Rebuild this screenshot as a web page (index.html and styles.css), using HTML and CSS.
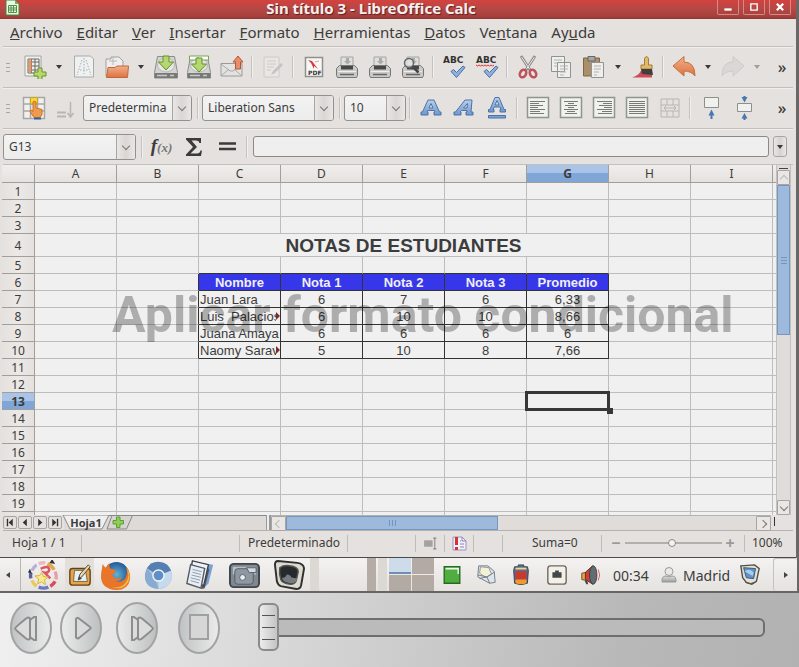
FILE: index.html
```html
<!DOCTYPE html>
<html lang="es">
<head>
<meta charset="utf-8">
<title>Sin título 3 - LibreOffice Calc</title>
<link rel="stylesheet" href="styles.css">
</head>
<body>
<svg class="defs" aria-hidden="true">
  <defs>
    <linearGradient id="gOrange" x2="0" y2="1"><stop stop-color="#f2b08d"/><stop offset="1" stop-color="#dd7340"/></linearGradient>
    <linearGradient id="gGrey" x2="0" y2="1"><stop stop-color="#e2e2e0"/><stop offset="1" stop-color="#9a9a98"/></linearGradient>
    <linearGradient id="gBlue" x2="0" y2="1"><stop stop-color="#b9cfea"/><stop offset="1" stop-color="#6f98cd"/></linearGradient>
    <linearGradient id="gPlay"><stop stop-color="#bfc2c3"/><stop offset="1" stop-color="#ececec"/></linearGradient>
    <linearGradient id="gPlayR"><stop stop-color="#ececec"/><stop offset="1" stop-color="#bcbfc0"/></linearGradient>
    <radialGradient id="gFox"><stop stop-color="#5fb4dc"/><stop offset="1" stop-color="#245893"/></radialGradient>
    <symbol id="printer" viewBox="0 0 24 24">
      <path d="M6 12V2h12v10z" fill="#dededc" stroke="#a5a5a3"/>
      <path d="M11 3h3v3h2l-3.500 3.500L9 6h2z" fill="#a9aaa7"/>
      <path d="M1.500 13.500l3-3h15l3 3v7l-1 2h-19l-1-2z" fill="#c9c9c6" stroke="#777"/>
      <path d="M6 11h12v3.500H6z" fill="#474747"/><path d="M5 19.500h14" stroke="#666" stroke-width="1.500"/><path d="M3 16.500h18" stroke="#eee"/>
    </symbol>
    <symbol id="disk" viewBox="0 0 24 24">
      <path d="M3.500 1.500h17l3 16v5.500h-23v-5.500z" fill="#d3d3d1" stroke="#8c8c8a"/>
      <path d="M.8 18h22.400v5H.8z" fill="#777977"/><path d="M3 20.500h10M16 20.500h4" stroke="#c8c8c6" stroke-width="1.500"/>
      <ellipse cx="12" cy="10" rx="8.500" ry="7" fill="#e6e6e4" stroke="#b7b7b5"/>
    </symbol>
    <symbol id="down" viewBox="0 0 24 24"><path d="M9 1h6v6h4.500L12 15 4.500 7H9z" fill="#b5d670" stroke="#5f9426"/></symbol>
    <symbol id="check" viewBox="0 0 24 24"><path d="M9 16.500l2.500-2 3 3 6.500-6.500 2 1.500-8.500 10z" fill="#8eb2e0" stroke="#4a6ea3"/></symbol>
    <symbol id="frame" viewBox="0 0 24 24"><path d="M1.500 1.500h21v20h-21z" fill="#f0f2ee" stroke="#91948f" stroke-width="1.500"/></symbol>
  </defs>
</svg>

<main class="window">
  <header class="titlebar">
    <svg class="app-icon" viewBox="0 0 16 16"><path d="M1 0h9l4 4v11H1z" fill="#f1f5ec" stroke="#3f8b35"/><path d="M10 0l4 4h-4z" fill="#70b25d"/><path d="M3.500 5.500h8v7h-8zM3.500 8h8M3.500 10h8M6 5.500v7M8.500 5.500v7" fill="none" stroke="#4a963f"/></svg>
    <h1>Sin título 3 - LibreOffice Calc</h1>
    <div class="win-buttons">
      <button aria-label="Minimizar"><svg viewBox="0 0 22 14"><path d="M7 8.500h8v2.500H7z" fill="#fff"/></svg></button>
      <button aria-label="Maximizar"><svg viewBox="0 0 22 14"><path d="M7.500 3.500h7v7h-7z" fill="none" stroke="#fff" stroke-width="1.500"/></svg></button>
      <button aria-label="Cerrar"><svg viewBox="0 0 22 14"><path d="M7.500 3.500l7 7m0-7l-7 7" stroke="#fff" stroke-width="2.500"/></svg></button>
    </div>
  </header>

  <nav class="menubar">
    <a href="#"><u>A</u>rchivo</a><a href="#"><u>E</u>ditar</a><a href="#"><u>V</u>er</a><a href="#"><u>I</u>nsertar</a><a href="#"><u>F</u>ormato</a><a href="#"><u>H</u>erramientas</a><a href="#"><u>D</u>atos</a><a href="#">Ve<u>n</u>tana</a><a href="#">Ay<u>u</u>da</a>
  </nav>

  <div class="toolbar standard">
    <span class="grip"></span>
    <button aria-label="Nuevo"><svg viewBox="0 0 24 24"><path d="M2 1h16v20H2z" fill="#f1f1ef" stroke="#a4a4a2"/><path d="M5 4h11v14H5zM5 7h11M5 11h11M5 15h11M8.500 4v14M12 4v14" fill="none" stroke="#666"/><path d="M5.500 4.500h3v13h-3z" fill="#e69a68"/><path d="M15 13h4v4h4v4h-4v4h-4v-4h-4v-4h4z" fill="#b8d86c" stroke="#64942c"/></svg></button>
    <button class="drop" aria-label="Más tipos"></button>
    <button aria-label="Plantilla"><svg viewBox="0 0 24 24"><path d="M2.500 1h16l3 3v18h-19z" fill="#eff0f0" stroke="#a9abab"/><path d="M10 5L5 20M14 5l5 15M12 3v16M8 15h8" stroke="#a7b0b5" fill="none" stroke-dasharray="1.500 1.500"/></svg></button>
    <button aria-label="Abrir"><svg viewBox="0 0 24 24"><path d="M1 21V4h5V2h8l4 4v15z" fill="#eee" stroke="#a0a09e"/><path d="M8 2v8M4 6h8" stroke="#b8b8b6"/><path d="M3 12.500h7l2-1.500h11.500l-1 11.500H1.500z" fill="url(#gOrange)" stroke="#c0683d"/></svg></button>
    <button class="drop" aria-label="Recientes"></button>
    <button aria-label="Guardar"><svg viewBox="0 0 24 24"><use href="#disk"/><use href="#down"/></svg></button>
    <button aria-label="Guardar como"><svg viewBox="0 0 24 24"><use href="#disk"/><path d="M2.500 1h19v4h-19z" fill="#fff" stroke="#76a552"/><path d="M11 2v2" stroke="#76a552"/><use href="#down" y="2"/></svg></button>
    <button aria-label="Correo"><svg viewBox="0 0 24 24"><path d="M1 8.500h21v12.500H1z" fill="#e2e2e0" stroke="#9b9b99"/><path d="M1 9l9 7 3 0 9-7M1 21l8-7M22 21l-8-7" fill="none" stroke="#aaa"/><path d="M15.500 14V7H13l5-6 5 6h-2.500v7z" fill="#e98d68" stroke="#b55634"/></svg></button>
    <i class="sep"></i>
    <button class="dim" aria-label="Editar"><svg viewBox="0 0 24 24"><path d="M3 2h15v20H3z" fill="#efefed" stroke="#aaa"/><path d="M6 6h9M6 9h9M6 12h7M6 15h4" stroke="#aaa"/><path d="M10 20l2-4 8-8 2 2-8 8z" fill="#999"/></svg></button>
    <i class="sep"></i>
    <button aria-label="Exportar PDF"><svg viewBox="0 0 24 24"><path d="M3.500 2.500h17v19h-17z" fill="#f7f7f5" stroke="#8f918d" stroke-width="1.500"/><path d="M6 5l4 1 6 8-4-3 0 3-3-6z" fill="#d43b43"/><path d="M13 7l4-1" stroke="#e8a0a0"/><text x="6" y="20" class="pdf">PDF</text></svg></button>
    <button aria-label="Imprimir directo"><svg viewBox="0 0 24 24"><use href="#printer"/></svg></button>
    <button aria-label="Imprimir"><svg viewBox="0 0 24 24"><use href="#printer"/></svg></button>
    <button aria-label="Vista previa"><svg viewBox="0 0 24 24"><use href="#printer"/><circle cx="8" cy="8" r="4.500" fill="#dfe3e5" fill-opacity=".8" stroke="#666" stroke-width="1.500"/><path d="M11.500 11.500l6 6" stroke="#444" stroke-width="2.500"/></svg></button>
    <i class="sep"></i>
    <button aria-label="Ortografía"><svg viewBox="0 0 24 24"><text x="1" y="8" class="abc">ABC</text><use href="#check"/></svg></button>
    <button aria-label="Revisión automática"><svg viewBox="0 0 24 24"><text x="1" y="8" class="abc">ABC</text><path d="M1 10l1.500 1L4 10l1.500 1L7 10l1.500 1 1.500-1 1.500 1 1.500-1 1.500 1 1.500-1 1.500 1 1.500-1" fill="none" stroke="#d33"/><use href="#check"/></svg></button>
    <i class="sep"></i>
    <button aria-label="Cortar"><svg viewBox="0 0 24 24"><path d="M5 1l9 14M19 1l-9 14" stroke="#8e908d" stroke-width="3"/><path d="M5.500 2l8 12M18.500 2l-8 12" stroke="#e6e6e4"/><ellipse cx="7" cy="18.500" rx="3" ry="4" transform="rotate(30 7 18.500)" fill="none" stroke="#bd525a" stroke-width="2.500"/><ellipse cx="17" cy="18.500" rx="3" ry="4" transform="rotate(-30 17 18.500)" fill="none" stroke="#bd525a" stroke-width="2.500"/></svg></button>
    <button aria-label="Copiar"><svg viewBox="0 0 24 24"><path d="M2.500 1.500h13v15h-13zM8.500 7.500h13v15h-13z" fill="#eff0ee" stroke="#91938f"/><path d="M5 5h8M5 8h3M5 11h3M11 11h8M11 14h8M11 17h6M11 20h4" stroke="#b0b2ae"/></svg></button>
    <button aria-label="Pegar"><svg viewBox="0 0 24 24"><path d="M1.500 3h16v18h-16z" fill="#a98f6a" stroke="#7d6747"/><path d="M6 1.500h7V6H6z" fill="#a7a9a5" stroke="#666"/><path d="M9.500 7.500h12v15h-12z" fill="#eff0ee" stroke="#91938f"/><path d="M12 11h7M12 14h7M12 17h5M12 20h3" stroke="#b0b2ae"/></svg></button>
    <button class="drop" aria-label="Pegado especial"></button>
    <button aria-label="Pincel de formato"><svg viewBox="0 0 24 24"><path d="M1 22.500q7-2 9-7l11 4v3z" fill="#cf4a55"/><path d="M13.500 10V3.500q2-4 4 0V10h3.500v4H10v-4z" fill="#e2b86a" stroke="#a57c36"/><path d="M10 14h11l1 6-11-1z" fill="#3f3f40"/></svg></button>
    <i class="sep"></i>
    <button aria-label="Deshacer"><svg viewBox="0 0 24 24"><path d="M1 11L12 1.500V7q11 0 11 14-4-5-11-5v5z" fill="url(#gOrange)" stroke="#c57138"/></svg></button>
    <button class="drop" aria-label="Lista deshacer"></button>
    <button class="dim" aria-label="Rehacer"><svg viewBox="0 0 24 24"><path d="M23 11L12 1.500V7Q1 7 1 21q4-5 11-5v5z" fill="#ccc" stroke="#aaa"/></svg></button>
    <button class="drop dim" aria-label="Lista rehacer"></button>
    <button class="more" aria-label="Más controles">»</button>
  </div>

  <div class="toolbar formatting">
    <span class="grip"></span>
    <button aria-label="Estilos"><svg viewBox="0 0 24 24"><path d="M1.500 1.500h21v21h-21zM1.500 8h21M1.500 15h21M8.500 1.500v21M15.500 1.500v21" fill="#f0f0ee" stroke="#a7a8a5" stroke-width="1.500"/><path d="M8.500 1.500h7V8h-7z" fill="#f2d43c" stroke="#c9a81f"/><path d="M11 6q1.500-1.500 3 0v6l6 1.500v5l-2 3h-6l-4-6 1-1.500 2 1.500z" fill="#ee9b4d" stroke="#c87325"/><path d="M12 21.500h7v2h-7z" fill="#3465a4"/></svg></button>
    <button class="dim" aria-label="Ordenar"><svg viewBox="0 0 24 24"><path d="M2 16.500h9M2 20.500h9" stroke="#777" stroke-width="2"/><path d="M15.500 6v14m-3-3l3 4 3-4" fill="none" stroke="#777" stroke-width="1.500"/></svg></button>
    <span class="combo style-box"><select aria-label="Estilo"><option>Predeterminado</option></select></span>
    <i class="sep"></i>
    <span class="combo font-box"><select aria-label="Nombre de la fuente"><option>Liberation Sans</option></select></span>
    <i class="sep"></i>
    <span class="combo size-box"><select aria-label="Tamaño"><option>10</option></select></span>
    <i class="sep"></i>
    <button aria-label="Negrita"><svg viewBox="0 0 24 24"><path fill-rule="evenodd" d="M9 4h6l5.500 12H22v3h-7v-3h1l-.5-1.500h-7L8 16h1v3H2v-3h1.500zM12 7.500L10 12h4z" fill="url(#gBlue)" stroke="#4b73aa"/></svg></button>
    <button aria-label="Cursiva"><svg viewBox="0 0 24 24"><path fill-rule="evenodd" d="M13 4h7l-1 12h2v3h-7v-3h1v-1.500H9.500L8 16h1v3H2v-3h1.500zM15.500 7.500L11.500 12h3.500z" fill="url(#gBlue)" stroke="#4b73aa"/></svg></button>
    <button aria-label="Subrayado"><svg viewBox="0 0 24 24"><path fill-rule="evenodd" d="M10 1.500h4l5 12h1.500v2.500H15v-2.500h1l-1-2.500H9l-1 2.500h1V16H3.500v-2.500H5zM12 4.500L10 9h4z" fill="url(#gBlue)" stroke="#4b73aa"/><path d="M3.500 19.500h17v2.500h-17z" fill="#7ba1d2" stroke="#4b73aa"/></svg></button>
    <i class="sep"></i>
    <button aria-label="Izquierda"><svg viewBox="0 0 24 24"><use href="#frame"/><path d="M4 5.500h15M4 7.500h9M4 9.500h13M4 11.500h8M4 13.500h15M4 15.500h10M4 17.500h14" stroke="#777a75"/></svg></button>
    <button aria-label="Centro"><svg viewBox="0 0 24 24"><use href="#frame"/><path d="M5 5.500h14M9 7.500h6M6 9.500h12M9 11.500h6M5 13.500h14M8 15.500h8M6 17.500h12" stroke="#777a75"/></svg></button>
    <button aria-label="Derecha"><svg viewBox="0 0 24 24"><use href="#frame"/><path d="M5 5.500h15M11 7.500h9M7 9.500h13M12 11.500h8M5 13.500h15M10 15.500h10M6 17.500h14" stroke="#777a75"/></svg></button>
    <button aria-label="Justificado"><svg viewBox="0 0 24 24"><use href="#frame"/><path d="M4 5.500h16M4 7.500h16M4 9.500h16M4 11.500h16M4 13.500h16M4 15.500h16M4 17.500h16" stroke="#777a75"/></svg></button>
    <button class="dim" aria-label="Combinar celdas"><svg viewBox="0 0 24 24"><path d="M3 3h18v18H3zM3 9h18M3 15h18M9 3v6M15 3v6M9 15v6M15 15v6M6 12h12M8 10l-2 2 2 2M16 10l2 2-2 2" fill="none" stroke="#777"/></svg></button>
    <i class="sep"></i>
    <button aria-label="Alinear abajo"><svg viewBox="0 0 24 24"><path d="M5.500 1.500h14v10h-14z" fill="#f0f0ee" stroke="#8c8f8a"/><path d="M12.500 23v-6" stroke="#4b76b0" stroke-width="2"/><path d="M9.500 19.500l3-6 3 6z" fill="#4b76b0"/></svg></button>
    <button aria-label="Centrar vertical"><svg viewBox="0 0 24 24"><path d="M5.500 7.500h14v8h-14z" fill="#f0f0ee" stroke="#8c8f8a"/><path d="M9.500 1h6l-3 5.500zM9.500 22.500l3-5.500 3 5.500zM11.500 0h2v3h-2zM11.500 21h2v3h-2z" fill="#4b76b0"/></svg></button>
    <button class="more" aria-label="Más controles">»</button>
  </div>

  <div class="toolbar formula">
    <span class="combo name-box"><select aria-label="Cuadro de nombre"><option>G13</option></select></span>
    <i class="sep"></i>
    <button class="fx" aria-label="Asistente de funciones"><b>f</b><em>(x)</em></button>
    <button aria-label="Suma"><svg viewBox="0 0 24 24"><path d="M4 3h15v5h-1.500q-.5-2.500-3-2.500H9.500L15 12l-6.500 6.500H15q3 0 3.500-3H20L19 21H4v-1.500l7-7.500-7-7.500z" fill="#3b3b3b"/></svg></button>
    <button aria-label="Función"><svg viewBox="0 0 24 24"><path d="M4 8.500h17M4 14h17" stroke="#3b3b3b" stroke-width="2.500"/></svg></button>
    <i class="sep"></i>
    <input class="formula-input" type="text" aria-label="Línea de entrada">
    <button class="expand" aria-label="Expandir barra"></button>
  </div>

  <div class="workspace">
    <div class="sheet-pane">
      <table class="sheet">
        <colgroup><col class="c-head"><col span="10" class="c-cell"></colgroup>
        <thead><tr><th></th><th>A</th><th>B</th><th>C</th><th>D</th><th>E</th><th>F</th><th class="current">G</th><th>H</th><th>I</th><th></th></tr></thead>
        <tbody>
          <tr><th>1</th><td></td><td></td><td></td><td></td><td></td><td></td><td></td><td></td><td></td><td></td></tr>
          <tr><th>2</th><td></td><td></td><td></td><td></td><td></td><td></td><td></td><td></td><td></td><td></td></tr>
          <tr><th>3</th><td></td><td></td><td></td><td></td><td></td><td></td><td></td><td></td><td></td><td></td></tr>
          <tr class="tall"><th>4</th><td></td><td></td><td colspan="5" class="heading">NOTAS DE ESTUDIANTES</td><td></td><td></td><td></td></tr>
          <tr class="above"><th>5</th><td></td><td></td><td></td><td></td><td></td><td></td><td></td><td></td><td></td><td></td></tr>
          <tr class="data names"><th>6</th><td></td><td></td><td>Nombre</td><td>Nota 1</td><td>Nota 2</td><td>Nota 3</td><td>Promedio</td><td></td><td></td><td></td></tr>
          <tr class="data"><th>7</th><td></td><td></td><td>Juan Lara</td><td>6</td><td>7</td><td>6</td><td>6,33</td><td></td><td></td><td></td></tr>
          <tr class="data"><th>8</th><td></td><td></td><td class="cut">Luis&nbsp; Palacios</td><td>6</td><td>10</td><td>10</td><td>8,66</td><td></td><td></td><td></td></tr>
          <tr class="data"><th>9</th><td></td><td></td><td>Juana Amaya</td><td>6</td><td>6</td><td>6</td><td>6</td><td></td><td></td><td></td></tr>
          <tr class="data"><th>10</th><td></td><td></td><td class="cut">Naomy Sarav</td><td>5</td><td>10</td><td>8</td><td>7,66</td><td></td><td></td><td></td></tr>
          <tr><th>11</th><td></td><td></td><td></td><td></td><td></td><td></td><td></td><td></td><td></td><td></td></tr>
          <tr><th>12</th><td></td><td></td><td></td><td></td><td></td><td></td><td></td><td></td><td></td><td></td></tr>
          <tr><th class="current">13</th><td></td><td></td><td></td><td></td><td></td><td></td><td class="selected"><span class="cursor"></span></td><td></td><td></td><td></td></tr>
          <tr><th>14</th><td></td><td></td><td></td><td></td><td></td><td></td><td></td><td></td><td></td><td></td></tr>
          <tr><th>15</th><td></td><td></td><td></td><td></td><td></td><td></td><td></td><td></td><td></td><td></td></tr>
          <tr><th>16</th><td></td><td></td><td></td><td></td><td></td><td></td><td></td><td></td><td></td><td></td></tr>
          <tr><th>17</th><td></td><td></td><td></td><td></td><td></td><td></td><td></td><td></td><td></td><td></td></tr>
          <tr><th>18</th><td></td><td></td><td></td><td></td><td></td><td></td><td></td><td></td><td></td><td></td></tr>
          <tr><th>19</th><td></td><td></td><td></td><td></td><td></td><td></td><td></td><td></td><td></td><td></td></tr>
          <tr class="partial"><th></th><td></td><td></td><td></td><td></td><td></td><td></td><td></td><td></td><td></td><td></td></tr>
        </tbody>
      </table>
      <p class="caption">Aplicar formato condicional</p>
    </div>
    <div class="vscroll">
      <i class="split"></i>
      <button class="sb up" aria-label="Subir"></button>
      <i class="thumb"></i>
      <i class="space"></i>
      <button class="sb down" aria-label="Bajar"></button>
    </div>
  </div>

  <div class="tabs">
    <div class="tab-nav">
      <button aria-label="Primera hoja"><svg viewBox="0 0 12 12"><path d="M2.500 2h1.500v8H2.500zM9 2v8L4.500 6z"/></svg></button>
      <button aria-label="Hoja anterior"><svg viewBox="0 0 12 12"><path d="M8 2v8L3.500 6z"/></svg></button>
      <button aria-label="Hoja siguiente"><svg viewBox="0 0 12 12"><path d="M4 2v8l4.500-4z"/></svg></button>
      <button aria-label="Última hoja"><svg viewBox="0 0 12 12"><path d="M3 2v8l4.500-4zM8 2h1.500v8H8z"/></svg></button>
    </div>
    <div class="tab-strip">
      <button class="tab"><svg class="tab-shape" viewBox="0 0 48 15" preserveAspectRatio="none"><path d="M1 0l7 14h32l7-14z" fill="#efefef" stroke="#888"/></svg><span>Hoja1</span></button>
      <button class="add" aria-label="Añadir hoja"><svg viewBox="0 0 28 15"><path d="M6 .5h20.500l-6 13.500H1z" fill="#d8d4d1" stroke="#888"/><path d="M10.500 2h3.500v3.500h3.500V9H14v3.500h-3.500V9H7V5.500h3.500z" fill="#8fcf55" stroke="#5d9e35"/></svg></button>
    </div>
    <i class="tab-split"></i>
    <div class="hscroll">
      <button class="sb left" aria-label="Izquierda"></button>
      <i class="thumb"></i>
      <i class="space"></i>
      <button class="sb right" aria-label="Derecha"></button>
    </div>
    <i class="split-v"></i>
  </div>

  <footer class="status">
    <span class="s-sheet">Hoja 1 / 1</span>
    <span class="s-blank"></span>
    <span class="s-style">Predeterminado</span>
    <span class="s-mid"></span>
    <span class="s-icon"><svg viewBox="0 0 14 12"><path d="M1 3h8v6H1z" fill="#a5a19e"/><path d="M9.500 1h3m-1.500 0v10m-1.500 0h3" stroke="#888" fill="none"/></svg></span>
    <span class="s-icon"><svg viewBox="0 0 15 15"><path d="M1 1h9l4 4v9H1z" fill="#f2f0f6" stroke="#9a94c4"/><path d="M10 1v4h4M8 5h1M8 8h4M8 11h4" fill="none" stroke="#8a84b8"/><path d="M3 1h3v8H3zM3 11h3v3H3z" fill="#d3323b"/></svg></span>
    <span class="s-gap"></span>
    <span class="s-sum">Suma=0</span>
    <span class="s-zoom"><b>−</b><input type="range" min="0" max="100" value="49" aria-label="Zoom"><b>+</b></span>
    <span class="s-pct">100%</span>
  </footer>
</main>

<section class="taskbar">
  <button class="edge" aria-label="Ocultar panel"><svg viewBox="0 0 8 8"><path d="M6 1v6L2 4z" fill="#444"/></svg></button>
  <button class="app w44" aria-label="Menú"><svg viewBox="0 0 32 32"><g fill="none" stroke-width="3.500"><path d="M4 11a13 13 0 0 1 5-6" stroke="#b9b0d8"/><path d="M11 4a13 13 0 0 1 7-1" stroke="#e9b9bf"/><path d="M20 4a13 13 0 0 1 7 6" stroke="#dda94c"/><path d="M28 12a13 13 0 0 1 1 8" stroke="#e3a0a8"/><path d="M28 22a13 13 0 0 1-5 5" stroke="#d54d58"/><path d="M21 28a13 13 0 0 1-10 0" stroke="#6d78c4"/><path d="M9 27a13 13 0 0 1-5-6" stroke="#e8c95a"/><path d="M3 19a13 13 0 0 1 0-6" stroke="#5a5f9e"/><path d="M13 9q8-4 9 1-1 4-5 3l6 6" stroke="#dc5560" stroke-width="2.500"/></g><path d="M14 13l2 4 5 .5-4 3 1 5-4-3-4 2 1-5-4-3 5-.5z" fill="#f7ea8c" stroke="#d8b23c"/><path d="M22 3l3-4 3 5zM0 13l2-4 2 5z" fill="#333"/></svg></button>
  <button class="app w29 lit" aria-label="Editor gráfico"><svg viewBox="0 0 26 26"><rect x="2" y="6" width="22" height="18" rx="3" fill="#e9a544" stroke="#5d4420" stroke-width="1.500"/><path d="M7 8h12l2 12H6z" fill="#e9eef0" stroke="#6d6350"/><path d="M11 18l2-6 9-10 2 2-9 11z" fill="#e6d4a8" stroke="#4f4433"/><path d="M12 14l3 3-4 2z" fill="#444"/></svg></button>
  <button class="app w43" aria-label="Firefox"><svg viewBox="0 0 32 32"><circle cx="17" cy="15" r="13" fill="url(#gFox)"/><path d="M2 9q0-3 1-5 1 3 3 4 2-4 4-5-1 4 1 6 4 0 6 3-3 1-4 3 0 4 5 4 3 0 5-2-2 5-7 5 6 2 10-3 3-5 1-12 5 6 4 13-2 11-14 11Q2 30 1 18q0-6 1-9z" fill="#e8752a"/><path d="M27 8q5 9-1 16-6 6-14 4 12 4 17-5 4-8-2-15z" fill="#f4b63f"/></svg></button>
  <button class="app w43" aria-label="Chromium"><svg viewBox="0 0 32 32"><circle cx="16" cy="16" r="14" fill="#a9c3de"/><path d="M16 16L4 8.500A14 14 0 0 1 29 11z" fill="#557fb0"/><path d="M16 16l13-5q4 15-13 19z" fill="#c5daee"/><path d="M4 8.500L13 20l3 10Q1 29 2 15z" fill="#89abd1"/><circle cx="16" cy="16" r="6.500" fill="#eef4fa"/><circle cx="16" cy="16" r="5" fill="#5e8fc6"/></svg></button>
  <button class="app w40 big" aria-label="Notas"><svg viewBox="0 0 32 32"><path d="M9 2l21 3-5 20-6 6z" fill="#7ba0d5"/><path d="M24 8l2 2-5 20-4 1z" fill="#56585e"/><path d="M8 1l17 4-5 22L3 23z" fill="#eef3f8" stroke="#3f444c" stroke-width="1.500"/><path d="M6 5l15 4-4 21-15-5z" fill="#e8eef4" stroke="#555b63" stroke-width="1.500"/><path d="M8 10l10 2.500M8 13l9 2.500M7 16l10 2.500M6 19l10 2.500M6 22l9 2.500" stroke="#8799ae"/></svg></button>
  <button class="app w48" aria-label="Disco"><svg viewBox="0 0 32 32"><rect x="1" y="4" width="30" height="24" rx="4" fill="#7f8790" stroke="#41464c" stroke-width="2"/><path d="M4 7h24v8H4z" fill="#b7bfc7"/><rect x="6" y="9" width="19" height="16" rx="3" fill="#8f98a2" stroke="#555c64"/><circle cx="14" cy="18" r="3" fill="#e8edf0" stroke="#59616a"/><path d="M18 8h10v5h-7z" fill="#d2dbe2" stroke="#555c64"/></svg></button>
  <button class="app w41" aria-label="Pantalla"><svg viewBox="0 0 32 32"><path d="M4 1l20 2q7 1 7 6l-3 17q-1 4-5 4l-16-3q-3-1-4-5L1 5q0-4 3-4z" fill="#dedad0" stroke="#2f2f2f" stroke-width="2"/><path d="M6 8q4-3 10-2 9 1 9 6l-2 9q-1 4-6 4-9-1-10-5-2-6-1-12z" fill="#262a2e" stroke="#55554f" stroke-width="1.500"/><path d="M8 18q4 1 5-3 4 0 5 3l6 1q-1 5-7 5-8-1-9-6z" fill="#777c80"/></svg></button>
  <i class="slot pale"></i><i class="gap"></i><i class="slot dark"></i><i class="slot pale two"></i>
  <span class="pager"><i class="on"></i><i></i><i></i><i></i></span>
  <button class="app w35" aria-label="Diccionario"><svg viewBox="0 0 24 24"><path d="M3.500 3h17v18h-17z" fill="#4fae3f" stroke="#276b22" stroke-width="1.500"/><path d="M5 4h14v2H5zM18 4h1.500v7H18z" fill="#f2f7ef"/></svg></button>
  <button class="app w33" aria-label="Mensajes"><svg viewBox="0 0 24 24"><path d="M4 2l10 0 7 6 1 12-6 1L3 14z" fill="#dbe5ee" stroke="#727a83"/><path d="M6 3l9 1 3 7-6 4-7-5z" fill="#f4f1d9" stroke="#8f968f"/><path d="M3 12l10 2 8-5M13 14l3 7M12 14l-7 2" fill="none" stroke="#727a83"/></svg></button>
  <button class="app w38" aria-label="Batería"><svg viewBox="0 0 24 24"><path d="M5 3h4V1h6v2h4l1 4-1 14q-7 3-14 0L4 7z" fill="#5b6f8c" stroke="#333b4a"/><path d="M6 8h12v9H6z" fill="#c8392f"/><path d="M6 17h12v4q-6 2-12 0z" fill="#f09a2d"/><path d="M6 5h12" stroke="#e7d88c" stroke-width="2"/></svg></button>
  <button class="app w33" aria-label="Red"><svg viewBox="0 0 24 24"><rect x="2" y="2" width="20" height="20" rx="3" fill="#f3f0e8" stroke="#6d675d" stroke-width="1.500"/><path d="M7 15V9h3V7h4v2h3v6z" fill="#42484a"/></svg></button>
  <button class="app w33" aria-label="Volumen"><svg viewBox="0 0 24 24"><path d="M3 10l6-1v9l-6-1z" fill="#e3a33e" stroke="#6b4b26"/><path d="M7 9l8-7v20l-8-5z" fill="#cc4136" stroke="#5b2a28"/><ellipse cx="15.500" cy="12" rx="4" ry="10" fill="#636a70" stroke="#3a3e42"/><path d="M6 18l2 4h2l-1-4z" fill="#444"/><path d="M21 6q3 6 0 12" stroke="#d55" fill="none"/></svg></button>
  <time class="clock">00:34</time>
  <svg class="user" viewBox="0 0 16 18"><circle cx="8" cy="5.500" r="4" fill="#e9e9e9" stroke="#999"/><path d="M1 16q-.5-6 4-6 3 2 6 0 4.500 0 4 6z" fill="url(#gGrey)" stroke="#999"/></svg>
  <span class="place">Madrid</span>
  <button class="app w40" aria-label="Apagar"><svg viewBox="0 0 24 24"><path d="M2 2l15-1 5 4-3 14-5 3-6-2-4-5z" fill="#e6e1d3" stroke="#4f4d47" stroke-width="1.500"/><path d="M5 4l13 1-2 11-8-1z" fill="#5f93cf" stroke="#3a5272"/><path d="M6 8q5-4 10 1l-1 4z" fill="#a9cdea"/><path d="M7 20q5 3 10 0" stroke="#55524b" fill="none"/></svg></button>
  <button class="edge right" aria-label="Ocultar panel"><svg viewBox="0 0 8 8"><path d="M2 1v6l4-3z" fill="#444"/></svg></button>
</section>

<section class="player">
  <button aria-label="Retroceder"><svg viewBox="0 0 42 52"><ellipse cx="21" cy="26" rx="20" ry="25" fill="url(#gPlay)" stroke="#a3a3a3" stroke-width="2"/><path d="M20 18l4-3h2v23h-2l-4-3z" fill="#dcdcdc" stroke="#8d8d8d" stroke-width="2"/><path d="M5 26.500q0-1 11-10 3-2 4 0v20q-1 2-4 0-11-9-11-10z" fill="#dcdcdc" stroke="#8d8d8d" stroke-width="2"/></svg></button>
  <button aria-label="Reproducir"><svg viewBox="0 0 42 52"><ellipse cx="21" cy="26" rx="20" ry="25" fill="url(#gPlayR)" stroke="#a3a3a3" stroke-width="2"/><path d="M16 17q1-2 3-.5l11 8.500q1.500 1 0 2l-11 9q-2 1-3-.5z" fill="#dadada" stroke="#8d8d8d" stroke-width="2"/></svg></button>
  <button aria-label="Avanzar"><svg viewBox="0 0 42 52"><ellipse cx="21" cy="26" rx="20" ry="25" fill="url(#gPlayR)" stroke="#a3a3a3" stroke-width="2"/><path d="M22 18l-4-3h-2v23h2l4-3z" fill="#dcdcdc" stroke="#8d8d8d" stroke-width="2"/><path d="M22 16.500q1-2 4 0 11 9 11 10t-11 10q-3 2-4 0z" fill="#dcdcdc" stroke="#8d8d8d" stroke-width="2"/></svg></button>
  <button aria-label="Detener"><svg viewBox="0 0 42 52"><ellipse cx="21" cy="26" rx="20" ry="25" fill="url(#gPlay)" stroke="#a3a3a3" stroke-width="2"/><path d="M12 13h18v24H12z" fill="#d6d6d6" stroke="#a0a0a0" stroke-width="2"/></svg></button>
  <input type="range" min="0" max="100" value="0" aria-label="Progreso">
</section>
</body>
</html>
```

FILE: styles.css
```css
* { box-sizing: border-box; }

body {
  margin: 0;
  min-height: 100vh;
  display: flex;
  flex-direction: column;
  background: #6a6867;
  color: #3c3c3c;
  font: 12px/16px "Noto Sans", "Open Sans", sans-serif;
}

button, select, input { font: inherit; color: inherit; margin: 0; }
button { border: 0; padding: 0; background: none; }
i { display: block; flex: none; }
svg { display: block; flex: none; }
.defs { position: absolute; width: 0; height: 0; }

.window {
  margin-right: 3px;
  background: #e5e1de;
  border-bottom: 1px solid #4a4a48;
}

/* title bar */
.titlebar {
  display: flex;
  align-items: flex-start;
  height: 19px;
  padding: 0 5px;
  background: linear-gradient(#d4423e, #b54845 45%, #a9403c 85%, #8e3733);
}
.app-icon { width: 16px; height: 16px; margin-right: 4px; }
.titlebar h1 {
  flex: 1;
  margin: 0;
  text-align: center;
  color: #f4eeee;
  font-size: 15px;
  font-weight: 700;
  line-height: 16px;
  text-shadow: 1px 1px 1px #5d2020;
}
.win-buttons { display: flex; gap: 4px; }
.win-buttons button {
  width: 22px;
  height: 15px;
  border: 1px solid #d68a87;
  border-top: 0;
  border-radius: 0 0 2px 2px;
}
.win-buttons svg { width: 20px; height: 14px; }

/* menu */
.menubar {
  display: flex;
  gap: 14px;
  height: 28px;
  margin: 0 3px;
  padding: 3px 7px;
  border-bottom: 1px solid #c4bfbc;
  font-size: 15px;
  line-height: 20px;
}
.menubar a { color: inherit; text-decoration: none; }

/* toolbars */
.toolbar {
  display: flex;
  align-items: center;
  height: 41px;
  margin: 0 3px;
  padding-left: 3px;
  border-bottom: 1px solid #c4bfbc;
  box-shadow: inset 0 1px #f1efed;
}
.toolbar button { flex: none; display: grid; place-items: center; width: 33px; height: 32px; }
.toolbar svg { width: 24px; height: 24px; }
.grip {
  width: 4px;
  height: 9px;
  margin-right: 7px;
  background: repeating-linear-gradient(#aaa6a3 0 1px, transparent 1px 4px);
}
.standard .grip { margin-right: 8px; }
.toolbar .sep { width: 2px; height: 22px; margin: 0 3px; background: linear-gradient(90deg, #c6c2bf 50%, #f2f0ee 50%); }
.toolbar .drop { width: 16px; }
.drop::before, .expand::before {
  content: "";
  border: 3px solid transparent;
  border-top: 4px solid #3a3a3a;
  border-bottom: 0;
}
.toolbar .dim { opacity: .4; }
.toolbar .more { width: 20px; margin-left: auto; margin-right: 1px; font-size: 16px; font-weight: 500; line-height: 20px; }
.abc { font: 700 9px "DejaVu Sans", sans-serif; fill: #333; }
.pdf { font: 700 6px "DejaVu Sans", sans-serif; fill: #333; }

.combo { position: relative; flex: none; height: 26px; }
.combo select {
  width: 100%;
  height: 26px;
  padding: 0 24px 0 5px;
  appearance: none;
  border: 1px solid #93908d;
  border-radius: 3px;
  background: linear-gradient(#f3f3f3, #ececec);
  overflow: hidden;
}
.combo::before {
  content: "";
  position: absolute;
  top: 1px;
  right: 1px;
  width: 18px;
  height: 24px;
  border-left: 1px solid #a8a4a1;
  border-radius: 0 2px 2px 0;
  background: linear-gradient(90deg, #e9e7e5, #d9d6d4, #e9e7e5);
  pointer-events: none;
}
.combo::after {
  content: "";
  position: absolute;
  top: 9px;
  right: 7px;
  width: 5px;
  height: 5px;
  border: solid #777;
  border-width: 0 1px 1px 0;
  transform: rotate(45deg);
  pointer-events: none;
}
.style-box { width: 109px; margin-right: 2px; }
.font-box { width: 132px; margin-right: 2px; }
.size-box { width: 62px; }
.name-box { width: 133px; margin-right: 2px; }

.formula { height: 36px; padding-left: 0; }
.formula .fx { width: 31px; display: block; font: italic 700 19px/30px "Liberation Serif", serif; }
.fx em { font-size: 13px; color: #777; }
.formula-input {
  flex: 1;
  min-width: 0;
  height: 21px;
  margin-left: 2px;
  border: 1px solid #8b8987;
  border-radius: 3px;
  background: #efefef;
}
.toolbar .expand {
  width: 14px;
  height: 21px;
  margin: 0 6px 0 4px;
  border: 1px solid #a8a4a1;
  border-radius: 3px;
  background: linear-gradient(90deg, #e9e7e5, #d5d2d0, #e9e7e5);
}

/* sheet */
.workspace { display: flex; margin: 0 5px 0 2px; }
.sheet-pane { position: relative; flex: 1; min-width: 0; overflow: hidden; background: #f0f0f0; }
.sheet {
  width: 853px;
  table-layout: fixed;
  border-collapse: separate;
  border-spacing: 0;
  font: 13px/14px "Liberation Sans", Arial, sans-serif;
}
.c-head { width: 33px; }
.c-cell { width: 82px; }
.sheet th, .sheet td { height: 17px; padding: 2px 0 0; border: solid #bdbdbd; border-width: 0 1px 1px 0; white-space: nowrap; }
.sheet th {
  border-color: #a19e9b;
  background: linear-gradient(90deg, #e4e1df, #ebe8e6, #e4e1df);
  font: 12px/14px "Noto Sans", "Open Sans", sans-serif;
}
.sheet thead th { height: 18px; padding-top: 1px; background: linear-gradient(#f0eeec, #e5e1de); }
.sheet th.current, .sheet thead th.current { background: linear-gradient(#a9c4e6 50%, #7fa6d6 50%); font-weight: 700; }
.sheet .tall td, .sheet .tall th { height: 23px; }
.sheet .partial td, .sheet .partial th { height: 3px; padding: 0; border-bottom: 0; }
.sheet .heading { text-align: center; font-size: 19px; font-weight: 700; line-height: 20px; }
.above td:nth-child(n+4):nth-child(-n+8) { border-bottom-color: #333; }
.data td:nth-child(3) { border-right-color: #333; }
.sheet .data td:nth-child(n+4):nth-child(-n+8) { border-color: #333; text-align: center; }
.sheet .data:not(.names) td:nth-child(4) { padding-left: 1px; text-align: left; overflow: hidden; }
.sheet .names td:nth-child(n+4):nth-child(-n+8) { background: #3737ea; color: #f0f0f0; font-weight: 700; }
.cut { position: relative; }
.cut::before { content: ""; position: absolute; top: 1px; right: 0; width: 4px; height: 14px; background: #f0f0f0; }
.cut::after {
  content: "";
  position: absolute;
  top: 4px;
  right: 0;
  border: 4px solid transparent;
  border-left: 4px solid #7a2c2c;
  border-right: 0;
}
.selected { position: relative; }
.cursor { position: absolute; inset: -2px; z-index: 1; border: 3px solid #373737; }
.cursor::after { content: ""; position: absolute; right: -6px; bottom: -6px; width: 6px; height: 6px; background: #373737; }
.caption {
  position: absolute;
  top: 115px;
  left: 110px;
  margin: 0;
  color: rgba(0, 0, 0, .28);
  font: 700 50px/70px Roboto, "Noto Sans", sans-serif;
  white-space: nowrap;
}

/* scroll bars */
.vscroll { display: flex; flex-direction: column; width: 15px; background: #e0dcd9; border: solid #c4c0bd; border-width: 0 1px; }
.vscroll .split { height: 5px; border: solid #444; border-width: 0 0 1px; margin: -1px 2px 1px; }
.sb { position: relative; flex: none; width: 15px; height: 15px; border: 1px solid #a8a4a1; border-radius: 1px; background: #e9e6e4; }
.sb::before { content: ""; position: absolute; left: 4px; top: 4px; width: 5px; height: 5px; border: solid #777; border-width: 1px 0 0 1px; }
.vscroll .sb { width: 13px; }
.sb.up::before { left: 3px; top: 5px; transform: rotate(45deg); border-color: #bbb; }
.sb.down::before { left: 3px; top: 3px; transform: rotate(225deg); }
.sb.left::before { transform: rotate(-45deg); border-color: #bbb; }
.sb.right::before { left: 3px; transform: rotate(135deg); }
.thumb { display: grid; place-items: center; border: 1px solid #7596bf; background: #9db9dc; }
.thumb::before { content: ""; width: 6px; height: 7px; background: repeating-linear-gradient(#7395c0 0 1px, transparent 1px 3px); }
.vscroll .thumb { flex: 150; }
.vscroll .space { flex: 167; }

/* sheet tabs */
.tabs { display: flex; height: 16px; margin: 0 3px; border-bottom: 1px solid #b5b1ae; }
.tab-nav { display: flex; gap: 1px; margin-right: 2px; }
.tab-nav button { width: 14px; height: 13px; margin-top: 1px; border: 1px solid #a8a4a1; border-radius: 2px; }
.tab-nav svg { width: 12px; height: 11px; fill: #333; }
.tab-strip { display: flex; width: 202px; border-top: 1px solid #888; background: #dedad7; }
.tab { position: relative; width: 44px; height: 14px; font-weight: 700; font-size: 11px; line-height: 13px; margin-top: -1px; }
.tab-shape { position: absolute; left: -2px; top: 0; width: 48px; height: 15px; }
.tab span { position: relative; }
.add { height: 15px; margin-top: -1px; margin-left: -2px; }
.add svg { width: 28px; height: 15px; }
.tab-split { width: 5px; border: solid #999; border-width: 0 2px 0 1px; background: #eee; }
.hscroll { display: flex; flex: 1; background: #e0dcd9; border-top: 1px solid #b5b1ae; }
.hscroll .thumb { flex: 212; }
.hscroll .thumb::before { width: 7px; height: 6px; background: repeating-linear-gradient(90deg, #7395c0 0 1px, transparent 1px 3px); }
.hscroll .space { flex: 260; }
.split-v { width: 4px; margin: 2px 18px 4px 0; border-right: 1px solid #333; }

/* status bar */
.status { display: flex; align-items: center; height: 26px; margin: 0 3px; padding-bottom: 2px; }
.status > span { display: flex; align-items: center; height: 17px; white-space: nowrap; border-right: 1px solid #c0bcb9; }
.s-sheet { width: 79px; padding-left: 9px; }
.s-blank { flex: 157; }
.status .s-style { width: 108px; padding-left: 8px; }
.s-mid { width: 68px; }
.s-icon { width: 29px; justify-content: center; }
.s-icon svg { width: 15px; height: 15px; }
.s-gap { width: 29px; }
.s-sum { width: 99px; padding-left: 29px; }
.s-zoom { width: 143px; gap: 4px; justify-content: center; }
.status .s-pct { width: 48px; border: 0; padding-left: 7px; }
.s-zoom b { color: #999; font-size: 16px; line-height: 16px; }
.s-zoom input { width: 97px; height: 10px; appearance: none; background: linear-gradient(transparent 4px, #b3afac 4px 6px, transparent 6px); }
.s-zoom input::-webkit-slider-thumb { appearance: none; width: 8px; height: 8px; border: 1px solid #8b8885; border-radius: 50%; background: #f4f3f2; }

/* desktop panel */
.taskbar {
  display: flex;
  align-items: center;
  height: 35px;
  margin-right: 2px;
  border-bottom: 2px solid #666;
  background: linear-gradient(#f4f3f2, #e5e2df);
  font-size: 14px;
}
.taskbar .edge { display: grid; place-items: center; width: 21px; height: 33px; padding-right: 4px; border-right: 1px solid #bbb6b2; }
.taskbar .edge svg { width: 8px; height: 8px; }
.taskbar .edge.right { width: 24px; margin-left: auto; padding: 0; border: 1px solid #c5c1be; border-width: 1px 0 0 1px; border-radius: 3px; }
.app { display: grid; place-items: center; flex: none; height: 33px; padding-top: 1px; }
.app svg { width: 22px; height: 22px; }
.w29 { width: 29px; }
.w33 { width: 33px; }
.w35 { width: 35px; }
.w38 { width: 38px; }
.w40 { width: 40px; }
.w41 { width: 42px; }
.w43 { width: 43px; }
.w44 { width: 44px; }
.w48 { width: 48px; }
.w43 svg, .w44 svg, .w48 svg, .w41 svg { width: 31px; height: 31px; }
.big svg { width: 30px; height: 30px; }
.lit svg { width: 24px; height: 24px; }
.lit { background: #e4dfdb; }
.slot { width: 9px; height: 33px; background: #dcd8d4; }
.slot.dark { background: #b5aca5; }
.slot.two { margin: 0 2px; }
.gap { width: 48px; height: 33px; background: linear-gradient(#f4f3f2, #e5e2df); }
.pager { display: grid; grid-template-columns: 22px 22px; grid-auto-rows: 16px; gap: 1px; }
.pager i { background: #b3aaa3; }
.pager .on { background: #cddbea; border-bottom: 2px solid #6e8eb3; }
.clock { margin-left: 7px; width: 48px; padding-top: 2px; }
.place { padding-top: 2px; }
.user { width: 16px; height: 18px; margin-right: 6px; }

/* playback controls */
.player {
  display: flex;
  align-items: center;
  flex: 1;
  min-height: 75px;
  padding: 0 34px 6px 10px;
  background: linear-gradient(100deg, #f0f0f0, #d8d8d8 35%, #b8b8b8 78%, #b2b2b2);
}
.player button { flex: none; margin-right: 8px; }
.player button:nth-child(2) { margin-right: 14px; }
.player button:nth-child(3) { margin-right: 20px; }
.player button:nth-child(4) { margin-right: 38px; }
.player svg { width: 42px; height: 52px; }
.player input { flex: 1; min-width: 0; height: 48px; appearance: none; background: none; }
.player input::-webkit-slider-runnable-track { height: 19px; border: 2px solid #6e6e6e; border-radius: 6px; background: #bbb; }
.player input::-webkit-slider-thumb {
  appearance: none;
  width: 21px;
  height: 48px;
  margin: -17px 0 0 -2px;
  border: 2px solid #8a8a8a;
  border-radius: 6px;
  background:
    linear-gradient(#555, #555) center 10px / 13px 1px no-repeat,
    linear-gradient(#555, #555) center 22px / 13px 1px no-repeat,
    linear-gradient(#555, #555) center 34px / 13px 1px no-repeat,
    linear-gradient(90deg, #ececec, #c4c4c4);
}
```
